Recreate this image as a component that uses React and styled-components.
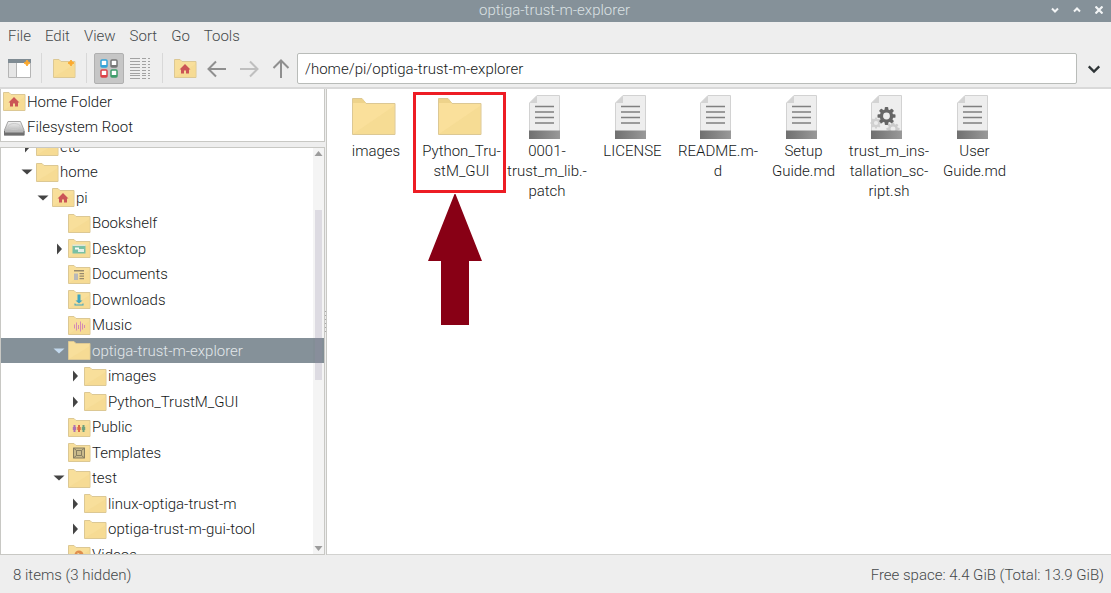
import React from "react";
import styled, { createGlobalStyle, css } from "styled-components";

const GlobalStyle = createGlobalStyle`
  * { box-sizing: border-box; }
  body {
    margin: 0;
    font: 300 15px/20px Roboto, "Liberation Sans", sans-serif;
    color: #16191a;
    background: #eeeeee;
  }
  button, input { font: inherit; color: inherit; }
`;

const Window = styled.div`
  display: flex;
  flex-direction: column;
  height: 100vh;
  overflow: hidden;
`;

const TitleBar = styled.header`
  flex: none;
  display: grid;
  grid-template-columns: 1fr auto 1fr;
  align-items: center;
  height: 22px;
  padding: 0 2px 2px 0;
  background: #859199;
  color: #dbe1e4;
`;

const Title = styled.h1`
  grid-column: 2;
  margin: 0;
  font-size: 15px;
  line-height: 20px;
  font-weight: 300;
`;

const WindowControls = styled.div`
  display: flex;
  justify-content: flex-end;
  gap: 2px;
`;

const PlainButton = styled.button`
  display: flex;
  align-items: center;
  justify-content: center;
  padding: 0;
  border: 0;
  background: none;
  cursor: pointer;
`;

const ControlButton = styled(PlainButton)`
  width: 20px;
  height: 20px;
`;

const MenuBar = styled.nav`
  flex: none;
  display: flex;
  align-items: center;
  gap: 14px;
  height: 28px;
  padding-left: 8px;
  color: #45494b;
`;

const MenuButton = styled(PlainButton)``;

const ToolBar = styled.div`
  flex: none;
  display: flex;
  height: 39px;
  padding: 3px 2px 4px 4px;
  border-bottom: 2px solid #d9d9d9;
`;

const ToolButton = styled(PlainButton)`
  flex: none;
  width: 30px;
  height: 31px;
  ${(p) =>
    p.$active &&
    css`
      border: 1px solid #b0b0b0;
      border-radius: 2px;
      background: #c6c6c6;
    `}
`;

const Group = styled.div`
  display: flex;
  gap: ${(p) => p.$gap || 0}px;
`;

const Separator = styled.span`
  width: 1px;
  margin: 0 7px;
  background: #d8d8d8;
`;

const PathInput = styled.input`
  flex: 1;
  min-width: 0;
  height: 31px;
  margin: 0 2px 0 1px;
  padding: 0 7px;
  border: 1px solid #b9bcb9;
  border-radius: 2px;
  background: #fff;
  outline: 0;
`;

const Content = styled.main`
  flex: 1;
  display: flex;
  min-height: 0;
`;

const Sidebar = styled.aside`
  flex: none;
  display: flex;
  flex-direction: column;
  gap: 5px;
  width: 325px;
`;

const Panel = styled.section`
  position: relative;
  overflow: hidden;
  border: 1px solid #c8c8c4;
  border-top-width: ${(p) => (p.$grow ? 1 : 0)}px;
  background: #fff;
  ${(p) => p.$grow && "flex: 1; min-height: 0;"}
`;

const List = styled.ul`
  margin: ${(p) => (p.$scrolled ? "-14px" : "0")} 0 0;
  padding: 0 0 1px;
  list-style: none;
`;

const Row = styled.li`
  display: flex;
  align-items: center;
  height: 25px;
  padding-left: ${(p) => p.$indent}px;
  &:nth-child(even) { height: 26px; }
  ${(p) =>
    p.$selected &&
    css`
      background: #859199;
      color: #e2e7ea;
    `}
`;

const RowButton = styled(PlainButton)`
  gap: 1px;
  white-space: nowrap;
`;

const Toggle = styled(PlainButton)`
  flex: none;
  width: 20px;
  height: 20px;
  padding-left: 2px;
`;

const ScrollBar = styled.div`
  position: absolute;
  top: 0;
  right: 0;
  bottom: 0;
  display: flex;
  flex-direction: column;
  align-items: center;
  width: 11px;
  background: rgba(120, 120, 120, 0.08);
`;

const ScrollPart = styled.span`
  flex: ${(p) => p.$share};
  width: 7px;
  background: ${(p) => (p.$thumb ? "rgba(150, 145, 170, 0.25)" : "transparent")};
`;

const Splitter = styled.div`
  flex: none;
  display: flex;
  align-items: center;
  width: 2px;
  border-right: 1px solid #c8c8c4;
  &::before {
    content: "";
    width: 1px;
    height: 22px;
    background: repeating-linear-gradient(#aaa 0 1px, #eee 1px 4px);
  }
`;

const Files = styled.section`
  flex: 1;
  display: flex;
  flex-wrap: wrap;
  align-content: flex-start;
  min-width: 0;
  padding-left: 4px;
  border-bottom: 1px solid #d2d2d0;
  background: #fff;
`;

const FileCell = styled.div`
  position: relative;
  width: 86px;
  &:nth-child(even) { width: 85px; }
`;

const FileButton = styled(PlainButton)`
  flex-direction: column;
  width: 100%;
  padding-top: 5px;
`;

const FileName = styled.span`
  padding-left: 4px;
  white-space: pre;
  text-align: center;
`;

const Highlight = styled.span`
  position: absolute;
  top: 3px;
  left: -4px;
  width: 93px;
  height: 101px;
  border: 3px solid #ed1c24;
  pointer-events: none;
`;

const Pointer = styled.svg`
  position: absolute;
  top: 105px;
  left: 11px;
  pointer-events: none;
`;

const StatusBar = styled.footer`
  flex: none;
  display: flex;
  justify-content: space-between;
  align-items: center;
  height: 38px;
  padding: 2px 7px 0 13px;
  color: #45494b;
`;

const emblems = {
  home: <path d="M11 5 5.500 10.500H7v4h3v-3h2v3h3v-4h1.500z" fill="#cb5456" />,
  desktop: (
    <g>
      <path d="M4.500 6.500h13v8h-13z" fill="#79c0a4" />
      <path d="M4.500 5.500h13v1.500h-13z" fill="#dfe6da" />
      <path d="M10 10h6v3h-6z" fill="#e3f0e9" />
      <path d="M7 8.500h4v2H7z" fill="#f7fbf8" />
    </g>
  ),
  documents: (
    <g>
      <path d="M6 5h10v1.500H6zM11.500 8h4.500v1.200h-4.500zM11.500 10.500h4.500v1.200h-4.500zM11.500 13h4.500v1.200h-4.500z" fill="#96896d" />
      <path d="M6 8.500h4V15H6z" fill="#b8b8b8" />
    </g>
  ),
  downloads: (
    <g fill="#3fa5bf">
      <path d="M9.500 4.500h3v6h2L11 13.500l-3.500-3h2z" />
      <path d="M6.500 13.500v2h9v-2h-1v1h-7v-1z" />
    </g>
  ),
  music: (
    <path
      d="M6.500 8.500v4M8.500 6.500v8M10.500 9v4M12.500 5.500v10M14.500 7.500v6M16.500 9v3"
      stroke="#d58ab5"
      strokeWidth="1"
      fill="none"
    />
  ),
  public: (
    <g>
      <path d="M5.500 7h2v2h.7v3h-.7v2h-2v-2h-.7V9h.7z" fill="#ae70b4" />
      <path d="M10 7h2v2h.7v3H12v2h-2v-2h-.7V9h.7z" fill="#dd6a44" />
      <path d="M14.500 7h2v2h.7v3h-.7v2h-2v-2h-.7V9h.7z" fill="#6fa07c" />
    </g>
  ),
  templates: (
    <g>
      <path d="M5.500 5h11v10h-11z" fill="#c9ba8b" stroke="#857c60" />
      <path d="M8.500 7.500h5v5h-5zM5.500 5l3 2.500M16.500 5l-3 2.500M5.500 15l3-2.500M16.500 15l-3-2.500" fill="none" stroke="#857c60" />
    </g>
  ),
  videos: (
    <g>
      <circle cx="11" cy="10" r="4.500" fill="#df8d4c" />
      <path d="m9.500 7.500 4 2.500-4 2.500z" fill="#f9dd9a" />
    </g>
  ),
  spark: <path d="m18 1 1 2 2 1-2 1-1 2-1-2-2-1 2-1z" fill="#fca92d" stroke="#fca92d" />,
};

function Folder({ emblem }) {
  return (
    <svg width="23" height="19" viewBox="0 0 23 19" aria-hidden="true">
      <path d="M.5 18.500V.5h5.500l2 2h14v16z" fill="#f8df9b" stroke="#dcc894" />
      <path d="M1 18 22 5v13z" fill="#f4d88d" opacity=".5" />
      {emblems[emblem]}
    </svg>
  );
}

function BigFolder() {
  return (
    <svg width="46" height="47" viewBox="0 0 46 47" aria-hidden="true">
      <path d="M1.500 40.500v-36h9.500l4 5h29v31z" fill="#fae09b" stroke="#dcc894" />
      <path d="M2 40 43 12v28z" fill="#f3d98f" opacity=".6" />
      <path d="M2 9V5h9l4 4z" fill="#eed38b" />
    </svg>
  );
}

function Gear({ cx, cy, r, color, hole = "#ececec" }) {
  return (
    <g transform={`translate(${cx} ${cy})`}>
      {[0, 45, 90, 135].map((angle) => (
        <rect
          key={angle}
          x={-r * 0.2}
          y={-r}
          width={r * 0.4}
          height={r * 2}
          rx={r * 0.1}
          fill={color}
          transform={`rotate(${angle})`}
        />
      ))}
      <circle r={r * 0.76} fill={color} />
      <circle r={r * 0.38} fill={hole} />
    </g>
  );
}

function Page({ script }) {
  return (
    <svg width="46" height="47" viewBox="0 0 46 47" aria-hidden="true">
      <defs>
        <linearGradient id="base">
          <stop offset="0" stopColor="#707070" />
          <stop offset="1" stopColor="#999" />
        </linearGradient>
      </defs>
      <path d="M7.500 44.500V9l7.500-7.500h22.500v43z" fill="#eeeeee" stroke="#d2d2d2" />
      <path d="M7.500 9 15 1.500V9z" fill="#d3d3d3" />
      {script ? (
        <g>
          <Gear cx={12} cy={29} r={5.5} color="#d0d0d0" />
          <Gear cx={29} cy={35} r={6.5} color="#cbcbcb" />
          <Gear cx={22.5} cy={22} r={9} color="#666" />
        </g>
      ) : (
        <path d="M13 12.500h19M13 18h19M13 23.500h19M13 29h19" stroke="#808080" strokeWidth="1.500" />
      )}
      <path d="M7 36.500h31V45H7z" fill="url(#base)" />
    </svg>
  );
}

function Drive() {
  return (
    <svg width="23" height="19" viewBox="0 0 23 19" aria-hidden="true">
      <defs>
        <linearGradient id="drive" x2="0" y2="1">
          <stop offset="0" stopColor="#f4f4f4" />
          <stop offset="1" stopColor="#9c9c9c" />
        </linearGradient>
      </defs>
      <path d="M5 3.500h12.500L21 12v5H1.500v-5z" fill="url(#drive)" stroke="#a5a5a5" />
      <path d="M1 13h20.500v4.500H1z" fill="#6f6f6f" />
      <path d="M2 13h18.500v1.500H2z" fill="#b8b8b8" />
      <ellipse cx="11.300" cy="8.500" rx="6" ry="3" fill="none" stroke="#c9c9c9" />
    </svg>
  );
}

function Arrow({ turn = 0, color = "#8f8f8f" }) {
  return (
    <svg width="20" height="20" viewBox="0 0 20 20" aria-hidden="true">
      <path
        d="M19 10H2M9 2.500 1.500 10 9 17.500"
        transform={`rotate(${turn} 10 10)`}
        fill="none"
        stroke={color}
        strokeWidth="2"
      />
    </svg>
  );
}

function NewWindow() {
  return (
    <svg width="23" height="19" viewBox="0 0 23 19" aria-hidden="true">
      <path d="M.5.500h22v18H.5z" fill="#fff" stroke="#b5b5b5" />
      <path d="M1 4h7v14H1z" fill="#e6e6e6" />
      <path d="M8.500 4v14" stroke="#b5b5b5" />
      <path d="M0 0h23v4H0z" fill="#7f8b93" />
      <path d="m19 1 1 2 2 1-2 1-1 2-1-2-2-1 2-1z" fill="#fca92d" stroke="#fca92d" />
    </svg>
  );
}

function IconView() {
  const tiles = [
    [1, 1, "#35a4d8"],
    [11, 1, "#777"],
    [1, 11, "#dc4148"],
    [11, 11, "#3f9d6b"],
  ];
  return (
    <svg width="18" height="20" viewBox="0 0 18 20" aria-hidden="true">
      {tiles.map(([x, y, color]) => (
        <g key={color}>
          <rect x={x} y={y} width="6" height="7" rx="1" fill="#fff" stroke={color} strokeWidth="1.500" />
          <path d={`M${x} ${y + 5}h6v2h-6z`} fill={color} />
        </g>
      ))}
    </svg>
  );
}

function ListView() {
  return (
    <svg width="22" height="22" viewBox="0 0 22 22" aria-hidden="true">
      <path
        d={[1, 4, 7, 10, 13, 16, 18, 21].map((y) => `M1 ${y - 0.5}h10M13 ${y - 0.5}h4M19 ${y - 0.5}h2`).join("")}
        stroke="#a2a2a2"
      />
    </svg>
  );
}

function Chevron({ up, color = "#f2f4f5", size = 8 }) {
  return (
    <svg width={size} height={size} viewBox="0 0 8 8" aria-hidden="true">
      <path d={up ? "M1 5.500 4 2.500l3 3" : "M1 2.500l3 3 3-3"} fill="none" stroke={color} strokeWidth={size > 8 ? 1.3 : 2} />
    </svg>
  );
}

function Triangle({ open, color = "#444" }) {
  return (
    <svg width="12" height="12" viewBox="0 0 12 12" aria-hidden="true">
      <path d={open ? "M.5 3.500h11l-5.500 5z" : "M4 .5v11L9 6z"} fill={color} />
    </svg>
  );
}

const tree = [
  { name: "etc", depth: 0, open: false },
  { name: "home", depth: 0, open: true },
  { name: "pi", depth: 1, open: true, emblem: "home" },
  { name: "Bookshelf", depth: 2 },
  { name: "Desktop", depth: 2, open: false, emblem: "desktop" },
  { name: "Documents", depth: 2, emblem: "documents" },
  { name: "Downloads", depth: 2, emblem: "downloads" },
  { name: "Music", depth: 2, emblem: "music" },
  { name: "optiga-trust-m-explorer", depth: 2, open: true, selected: true },
  { name: "images", depth: 3, open: false },
  { name: "Python_TrustM_GUI", depth: 3, open: false },
  { name: "Public", depth: 2, emblem: "public" },
  { name: "Templates", depth: 2, emblem: "templates" },
  { name: "test", depth: 2, open: true },
  { name: "linux-optiga-trust-m", depth: 3, open: false },
  { name: "optiga-trust-m-gui-tool", depth: 3, open: false },
  { name: "Videos", depth: 2, emblem: "videos" },
];

const files = [
  { name: "images", folder: true },
  { name: "Python_Tru-\nstM_GUI", folder: true, marked: true },
  { name: "0001-\ntrust_m_lib.-\npatch" },
  { name: "LICENSE" },
  { name: "README.m-\nd" },
  { name: "Setup\nGuide.md" },
  { name: "trust_m_ins-\ntallation_sc-\nript.sh", script: true },
  { name: "User\nGuide.md" },
];

function TreeRow({ item }) {
  const expandable = item.open !== undefined;
  return (
    <Row $indent={item.depth * 16 + (expandable ? 15 : 35)} $selected={item.selected}>
      {expandable && (
        <Toggle aria-label={`Toggle ${item.name}`} aria-expanded={item.open}>
          <Triangle open={item.open} color={item.selected ? "#c3d9ee" : undefined} />
        </Toggle>
      )}
      <RowButton>
        <Folder emblem={item.emblem} />
        {item.name}
      </RowButton>
    </Row>
  );
}

export default function App() {
  return (
    <Window>
      <GlobalStyle />
      <TitleBar>
        <Title>optiga-trust-m-explorer</Title>
        <WindowControls>
          <ControlButton aria-label="Minimize"><Chevron /></ControlButton>
          <ControlButton aria-label="Maximize"><Chevron up /></ControlButton>
          <ControlButton aria-label="Close">
            <svg width="8" height="8" viewBox="0 0 8 8" aria-hidden="true">
              <path d="m.5.500 7 7M7.500.5l-7 7" stroke="#f2f4f5" strokeWidth="2.200" />
            </svg>
          </ControlButton>
        </WindowControls>
      </TitleBar>
      <MenuBar>
        {["File", "Edit", "View", "Sort", "Go", "Tools"].map((name) => (
          <MenuButton key={name}>{name}</MenuButton>
        ))}
      </MenuBar>
      <ToolBar>
        <ToolButton aria-label="New window"><NewWindow /></ToolButton>
        <Separator />
        <ToolButton aria-label="New folder"><Folder emblem="spark" /></ToolButton>
        <Separator />
        <Group $gap={1}>
          <ToolButton $active aria-label="Icon view" aria-pressed="true"><IconView /></ToolButton>
          <ToolButton aria-label="List view" aria-pressed="false"><ListView /></ToolButton>
        </Group>
        <Separator />
        <Group $gap={2}>
          <ToolButton aria-label="Home"><Folder emblem="home" /></ToolButton>
          <ToolButton aria-label="Back"><Arrow /></ToolButton>
          <ToolButton aria-label="Forward"><Arrow turn={180} color="#bfbfbf" /></ToolButton>
          <ToolButton aria-label="Up"><Arrow turn={90} /></ToolButton>
        </Group>
        <PathInput aria-label="Path" defaultValue="/home/pi/optiga-trust-m-explorer" />
        <ToolButton aria-label="Path history"><Chevron color="#2e3436" size={14} /></ToolButton>
      </ToolBar>
      <Content>
        <Sidebar>
          <Panel aria-label="Places">
            <List>
              <Row $indent={2}><RowButton><Folder emblem="home" />Home Folder</RowButton></Row>
              <Row $indent={2}><RowButton><Drive />Filesystem Root</RowButton></Row>
            </List>
          </Panel>
          <Panel $grow aria-label="Folders">
            <List $scrolled>
              {tree.map((item) => <TreeRow key={item.name} item={item} />)}
            </List>
            <ScrollBar aria-hidden="true">
              <svg width="9" height="12" viewBox="0 0 9 12"><path d="M.5 8h8l-4-5z" fill="#9c9c9c" /></svg>
              <ScrollPart $share={50} />
              <ScrollPart $share={170} $thumb />
              <ScrollPart $share={162} />
              <svg width="9" height="12" viewBox="0 0 9 12"><path d="M.5 4h8l-4 5z" fill="#9c9c9c" /></svg>
            </ScrollBar>
          </Panel>
        </Sidebar>
        <Splitter />
        <Files aria-label="Files">
          {files.map((file) => (
            <FileCell key={file.name}>
              <FileButton>
                {file.folder ? <BigFolder /> : <Page script={file.script} />}
                <FileName>{file.name}</FileName>
              </FileButton>
              {file.marked && (
                <>
                  <Highlight />
                  <Pointer width="54" height="131" viewBox="0 0 54 131" aria-hidden="true">
                    <path d="M26.500 0h1L54 67H41v64H13V67H0z" fill="#880015" />
                  </Pointer>
                </>
              )}
            </FileCell>
          ))}
        </Files>
      </Content>
      <StatusBar>
        <span>8 items (3 hidden)</span>
        <span>Free space: 4.4 GiB (Total: 13.9 GiB)</span>
      </StatusBar>
    </Window>
  );
}
